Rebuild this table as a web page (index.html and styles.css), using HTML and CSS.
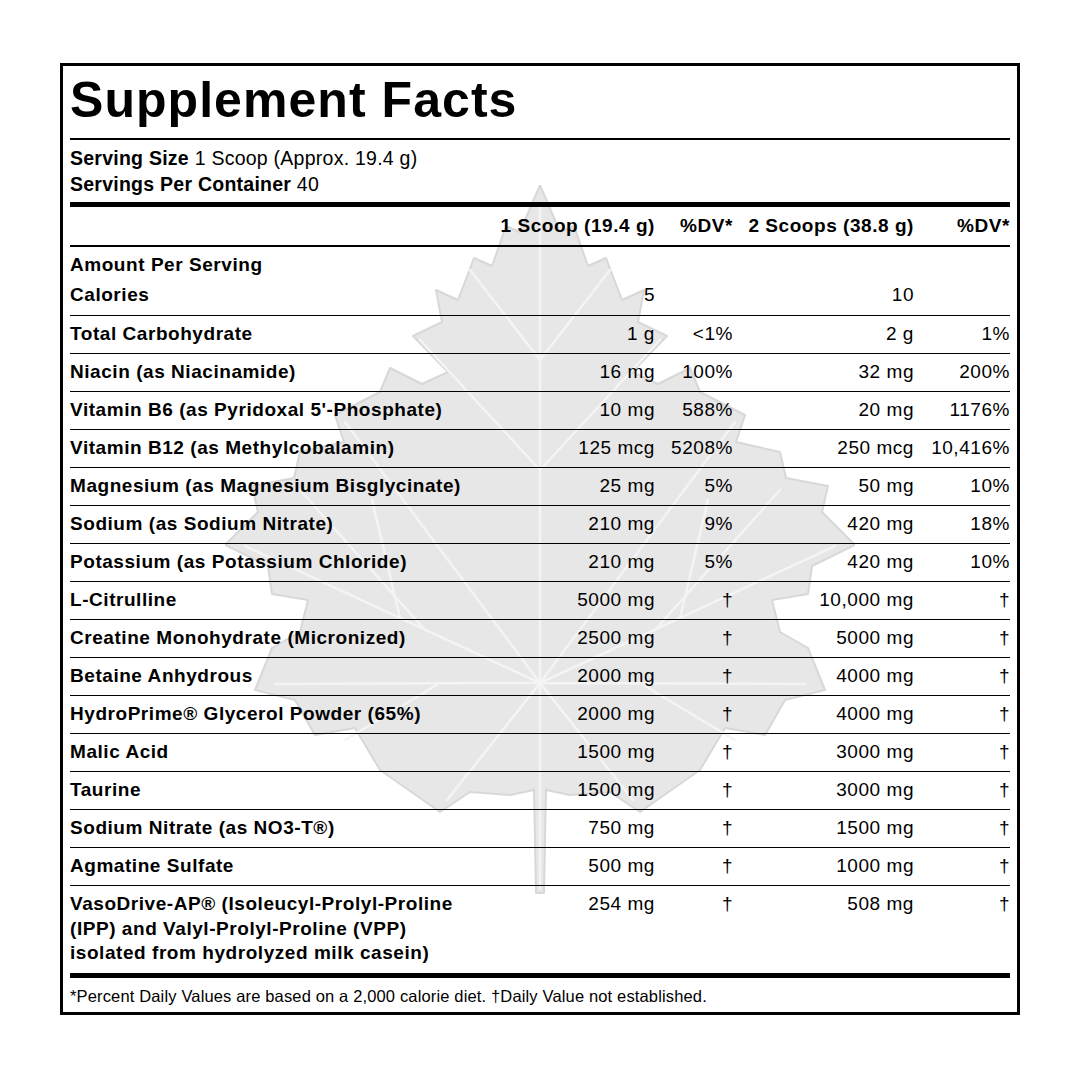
FILE: index.html
```html
<!DOCTYPE html>
<html>
<head>
<meta charset="utf-8">
<link rel="stylesheet" href="styles.css">
</head>
<body>
<div class="panel">
  <svg class="leaf" viewBox="225 185 630 710" xmlns="http://www.w3.org/2000/svg">
    <path class="leaf-body" d="M540 185L560 232 574 226 588 266 606 258 622 300 644 290 638 322 667 336 632 372 658 384 690 368 700 392 745 415 736 442 780 452 786 478 828 486 822 512 855 545 812 566 808 594 772 600 780 632 808 648 825 690 785 700 765 735 725 728 700 770 640 812 610 792 570 795 546 790 544 893 536 893 534 790 510 795 470 792 440 812 380 770 355 728 315 735 295 700 255 690 272 648 300 632 308 600 272 594 268 566 225 545 258 512 252 486 294 478 300 452 344 442 335 415 380 392 390 368 422 384 448 372 413 336 442 322 436 290 458 300 474 258 492 266 506 226 520 232Z"/>
    <path class="leaf-vein" d="M540 205V888M540 683L245 546M540 683L835 546M540 683L345 422M540 683L735 422M540 683L275 684M540 683L805 684M540 683L447 800M540 683L633 800M540 470L420 340M540 470L660 340M540 360L470 270M540 360L610 270M425 630L300 490M655 630L780 490M400 618L372 500M680 618L708 500M440 683L345 740M640 683L735 740"/>
  </svg>

  <h1 class="title">Supplement Facts</h1>

  <div class="serving">
    <div><b>Serving Size</b> 1 Scoop (Approx. 19.4 g)</div>
    <div><b>Servings Per Container</b> 40</div>
  </div>

  <div class="row head">
    <span></span>
    <span class="num">1 Scoop (19.4 g)</span>
    <span class="num">%DV*</span>
    <span class="num">2 Scoops (38.8 g)</span>
    <span class="num">%DV*</span>
  </div>

  <div class="amount">Amount Per Serving</div>

  <div class="row cal">
    <span class="name">Calories</span>
    <span class="num">5</span>
    <span class="num"></span>
    <span class="num">10</span>
    <span class="num"></span>
  </div>

  <div class="row"><span class="name">Total Carbohydrate</span><span class="num">1 g</span><span class="num">&lt;1%</span><span class="num">2 g</span><span class="num">1%</span></div>
  <div class="row"><span class="name">Niacin (as Niacinamide)</span><span class="num">16 mg</span><span class="num">100%</span><span class="num">32 mg</span><span class="num">200%</span></div>
  <div class="row"><span class="name">Vitamin B6 (as Pyridoxal 5'-Phosphate)</span><span class="num">10 mg</span><span class="num">588%</span><span class="num">20 mg</span><span class="num">1176%</span></div>
  <div class="row"><span class="name">Vitamin B12 (as Methylcobalamin)</span><span class="num">125 mcg</span><span class="num">5208%</span><span class="num">250 mcg</span><span class="num">10,416%</span></div>
  <div class="row"><span class="name">Magnesium (as Magnesium Bisglycinate)</span><span class="num">25 mg</span><span class="num">5%</span><span class="num">50 mg</span><span class="num">10%</span></div>
  <div class="row"><span class="name">Sodium (as Sodium Nitrate)</span><span class="num">210 mg</span><span class="num">9%</span><span class="num">420 mg</span><span class="num">18%</span></div>
  <div class="row"><span class="name">Potassium (as Potassium Chloride)</span><span class="num">210 mg</span><span class="num">5%</span><span class="num">420 mg</span><span class="num">10%</span></div>
  <div class="row"><span class="name">L-Citrulline</span><span class="num">5000 mg</span><span class="num">†</span><span class="num">10,000 mg</span><span class="num">†</span></div>
  <div class="row"><span class="name">Creatine Monohydrate (Micronized)</span><span class="num">2500 mg</span><span class="num">†</span><span class="num">5000 mg</span><span class="num">†</span></div>
  <div class="row"><span class="name">Betaine Anhydrous</span><span class="num">2000 mg</span><span class="num">†</span><span class="num">4000 mg</span><span class="num">†</span></div>
  <div class="row"><span class="name">HydroPrime® Glycerol Powder (65%)</span><span class="num">2000 mg</span><span class="num">†</span><span class="num">4000 mg</span><span class="num">†</span></div>
  <div class="row"><span class="name">Malic Acid</span><span class="num">1500 mg</span><span class="num">†</span><span class="num">3000 mg</span><span class="num">†</span></div>
  <div class="row"><span class="name">Taurine</span><span class="num">1500 mg</span><span class="num">†</span><span class="num">3000 mg</span><span class="num">†</span></div>
  <div class="row"><span class="name">Sodium Nitrate (as NO3-T®)</span><span class="num">750 mg</span><span class="num">†</span><span class="num">1500 mg</span><span class="num">†</span></div>
  <div class="row"><span class="name">Agmatine Sulfate</span><span class="num">500 mg</span><span class="num">†</span><span class="num">1000 mg</span><span class="num">†</span></div>
  <div class="row last">
    <span class="name multi">VasoDrive-AP® (Isoleucyl-Prolyl-Proline<br>(IPP) and Valyl-Prolyl-Proline (VPP)<br>isolated from hydrolyzed milk casein)</span>
    <span class="num">254 mg</span><span class="num">†</span><span class="num">508 mg</span><span class="num">†</span>
  </div>

  <p class="foot">*Percent Daily Values are based on a 2,000 calorie diet. †Daily Value not established.</p>
</div>
</body>
</html>
```

FILE: styles.css
```css
html, body {
  margin: 0;
  padding: 0;
  background: #fff;
}

body {
  font-family: "Liberation Sans", Arial, Helvetica, sans-serif;
  color: #000;
}

.panel {
  position: relative;
  z-index: 0;
  box-sizing: border-box;
  width: 960px;
  margin: 63px 0 0 60px;
  border: 3px solid #000;
  padding: 4px 7px 0;
  background: #fff;
}

.leaf {
  position: absolute;
  left: 162px;
  top: 119px;
  width: 630px;
  height: 710px;
  z-index: -1;
}

.leaf-body {
  fill: #e7e7e7;
  stroke: #d8d8d8;
  stroke-width: 2px;
  stroke-linejoin: round;
}

.leaf-vein {
  fill: none;
  stroke: #f4f4f4;
  stroke-width: 2.5px;
  stroke-linecap: round;
}

.title {
  margin: 0;
  font-size: 50px;
  line-height: 60px;
  font-weight: bold;
  letter-spacing: 1.05px;
  padding-bottom: 8px;
  border-bottom: 2px solid #000;
}

.serving {
  font-size: 19.5px;
  line-height: 26px;
  letter-spacing: 0.25px;
  padding: 5px 0;
  border-bottom: 5px solid #000;
}

.row {
  display: grid;
  grid-template-columns: 1fr 160px 78px 181px 96px;
  align-items: start;
  font-size: 19px;
  line-height: 24px;
  letter-spacing: 0.55px;
  padding: 6px 0 7px;
  border-bottom: 1px solid #000;
}

.name {
  font-weight: bold;
}

.num {
  text-align: right;
}

.head {
  font-weight: bold;
  padding: 7px 0;
  border-bottom: 2px solid #000;
}

.amount {
  font-size: 19px;
  line-height: 24px;
  letter-spacing: 0.55px;
  font-weight: bold;
  padding-top: 6px;
}

.cal {
  padding: 6px 0 8px;
}

.last {
  padding: 6px 0 7.5px;
  border-bottom: 5px solid #000;
}

.multi {
  line-height: 24.5px;
}

.foot {
  margin: 0;
  font-size: 16.5px;
  line-height: 20px;
  letter-spacing: 0.15px;
  padding: 7.5px 0 6.5px;
}
```
